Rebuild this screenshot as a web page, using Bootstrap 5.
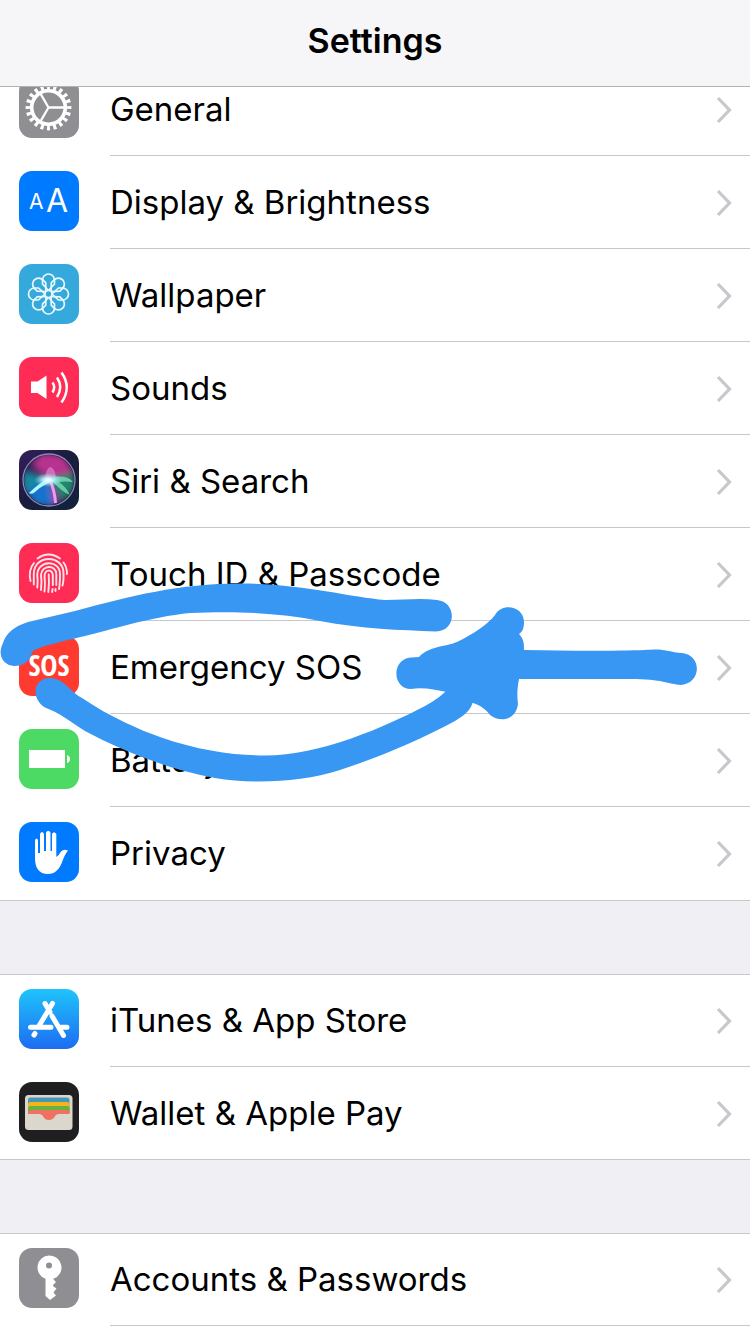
<!DOCTYPE html>
<html lang="en">
<head>
<meta charset="utf-8">
<meta name="viewport" content="width=device-width, initial-scale=1">
<title>Settings</title>
<link href="https://cdn.jsdelivr.net/npm/bootstrap@5.3.0/dist/css/bootstrap.min.css" rel="stylesheet">
<style>
  body { background: #efeff4; color: #000; font-family: Inter, "Liberation Sans", sans-serif; overflow-x: hidden; }
  .title-bar { height: 87px; background: #f6f6f8; border-bottom: 1px solid #b2b2b5; padding-bottom: 4px; }
  .title-bar h1 { font-size: 34px; line-height: 40px; font-weight: 600; }
  main { padding-top: 63px; gap: 73px; }
  .settings-group { background: #fff; box-shadow: inset 0 1px #c8c7cc, inset 0 -1px #c8c7cc; }
  .settings-group:first-of-type { padding-bottom: 1px; }
  .settings-group:last-of-type { box-shadow: inset 0 1px #c8c7cc; }
  .settings-row { height: 93px; padding-left: 19px; gap: 31px; color: #000; font-size: 33px; line-height: 40px; }
  .settings-row:hover { color: #000; }
  .row-body { border-bottom: 1px solid #c8c7cc; padding-right: 17px; }
  .end-row .row-body { border-bottom-color: transparent; }
  .app-icon { width: 60px; height: 60px; border-radius: 13px; margin-bottom: 4px; }
  .chevron { width: 17px; height: 28px; margin-top: 2px; }
  .ink { top: 0; left: 0; width: 750px; height: 900px; z-index: 5; pointer-events: none; }
</style>
</head>
<body>
<svg width="0" height="0" class="position-absolute" aria-hidden="true">
  <symbol id="chevron" viewBox="0 0 17 28"><path d="M2 2 13.500 14 2 26" fill="none" stroke="#c7c7cc" stroke-width="3.2"/></symbol>
</svg>
<header class="title-bar fixed-top d-flex align-items-center justify-content-center">
  <h1 class="m-0">Settings</h1>
</header>

<main class="position-relative d-flex flex-column min-vh-100">
  <nav class="settings-group" aria-label="Device">
    <a href="#general" class="settings-row d-flex align-items-center text-decoration-none">
      <svg class="app-icon flex-shrink-0" viewBox="0 0 60 60" aria-hidden="true">
        <rect width="60" height="60" fill="#8e8e93"/>
        <g fill="none" stroke="#fff">
          <circle cx="29.5" cy="29.5" r="20.5" stroke-width="4.800" pathLength="40" stroke-dasharray=".95 1.05" stroke-dashoffset=".475"/>
          <circle cx="29.5" cy="29.5" r="16.8" stroke-width="3.600"/>
          <path d="M29.500 29.500H46M29.500 29.500 21.200 15.200M29.500 29.500 21.200 43.800" stroke-width="2.300"/>
        </g>
      </svg>
      <span class="row-body d-flex flex-grow-1 h-100 align-items-center justify-content-between"><span>General</span><svg class="chevron" aria-hidden="true"><use href="#chevron"/></svg></span>
    </a>
    <a href="#display" class="settings-row d-flex align-items-center text-decoration-none">
      <svg class="app-icon flex-shrink-0" viewBox="0 0 60 60" aria-hidden="true">
        <rect width="60" height="60" fill="#007aff"/>
        <text x="10" y="38" font-size="21" fill="#fff">A</text><text x="27" y="41" font-size="32" fill="#fff">A</text>
      </svg>
      <span class="row-body d-flex flex-grow-1 h-100 align-items-center justify-content-between"><span>Display &amp; Brightness</span><svg class="chevron" aria-hidden="true"><use href="#chevron"/></svg></span>
    </a>
    <a href="#wallpaper" class="settings-row d-flex align-items-center text-decoration-none">
      <svg class="app-icon flex-shrink-0" viewBox="0 0 60 60" aria-hidden="true">
        <rect width="60" height="60" fill="#36a9dc"/>
        <defs><path id="petal" d="M29.500 26.500 23.500 20V16A6 6 0 0 1 35.500 16V20Z"/></defs>
        <g fill="none" stroke="#e9faff" stroke-width="1.700">
          <g id="petals"><use href="#petal"/><use href="#petal" transform="rotate(45 29.5 30)"/><use href="#petal" transform="rotate(90 29.5 30)"/><use href="#petal" transform="rotate(135 29.5 30)"/></g>
          <use href="#petals" transform="rotate(180 29.5 30)"/>
          <circle cx="29.500" cy="30" r="3.500" fill="#36a9dc"/>
        </g>
      </svg>
      <span class="row-body d-flex flex-grow-1 h-100 align-items-center justify-content-between"><span>Wallpaper</span><svg class="chevron" aria-hidden="true"><use href="#chevron"/></svg></span>
    </a>
    <a href="#sounds" class="settings-row d-flex align-items-center text-decoration-none">
      <svg class="app-icon flex-shrink-0" viewBox="0 0 60 60" aria-hidden="true">
        <rect width="60" height="60" fill="#ff2d55"/>
        <path d="M12 24.500h6.500L27.500 18.500V42L18.500 36H12Z" fill="#fff"/>
        <path d="M33.500 25.500Q37 30 33.500 35.500M38 20.500Q44.500 30 38 40M42.500 15.500Q53 30.500 42.500 45.500" fill="none" stroke="#fff" stroke-width="2.500"/>
      </svg>
      <span class="row-body d-flex flex-grow-1 h-100 align-items-center justify-content-between"><span>Sounds</span><svg class="chevron" aria-hidden="true"><use href="#chevron"/></svg></span>
    </a>
    <a href="#siri" class="settings-row d-flex align-items-center text-decoration-none">
      <svg class="app-icon flex-shrink-0" viewBox="0 0 60 60" aria-hidden="true">
        <defs>
          <linearGradient id="night" x1="0" y1="0" x2="1" y2="1"><stop offset="0" stop-color="#351e5e"/><stop offset=".5" stop-color="#191c3c"/><stop offset="1" stop-color="#10243c"/></linearGradient>
          <radialGradient id="glow"><stop offset="0" stop-color="#fff"/><stop offset=".35" stop-color="#d0fbff" stop-opacity=".85"/><stop offset="1" stop-color="#7fe8ff" stop-opacity="0"/></radialGradient>
          <filter id="haze" x="-50%" y="-50%" width="200%" height="200%"><feGaussianBlur stdDeviation="3"/></filter>
          <filter id="soft" x="-20%" y="-20%" width="140%" height="140%"><feGaussianBlur stdDeviation=".6"/></filter>
          <clipPath id="orb"><circle cx="30" cy="30" r="25"/></clipPath>
        </defs>
        <rect width="60" height="60" fill="url(#night)"/>
        <g clip-path="url(#orb)">
          <g filter="url(#haze)">
            <path d="M30 29 12 15 22 3 44 5 55 21Z" fill="#b8308f"/>
            <path d="M30 29 4 20 4 43Z" fill="#168aa0"/>
            <path d="M30 29 6 42 18 56 36 56Z" fill="#1672cc"/>
            <path d="M30 29 55 22 56 38 44 52Z" fill="#27846d"/>
            <path d="M31 31 34 55 41 52Z" fill="#a03cc0"/>
          </g>
          <g filter="url(#soft)">
            <path d="M26 29Q27 17 32 17Q37 20 37 30Z" fill="#e58ed4" fill-opacity=".6"/>
            <path d="M30 28Q20 33 10 43Q13 45 16 42Q24 34 36 31Z" fill="#b6f6ff"/>
            <path d="M34 27Q48 25 54 32Q46 31 40 32Q47 37 51 45Q42 41 34 32Z" fill="#6fd9b4" fill-opacity=".85"/>
            <path d="M31 30Q36 42 36.500 53" fill="none" stroke="#f49ae8" stroke-width="3"/>
          </g>
          <ellipse cx="29" cy="30" rx="14" ry="7" fill="url(#glow)"/>
        </g>
        <circle cx="30" cy="30" r="26" fill="none" stroke="#8e89b4" stroke-width="1.300"/>
      </svg>
      <span class="row-body d-flex flex-grow-1 h-100 align-items-center justify-content-between"><span>Siri &amp; Search</span><svg class="chevron" aria-hidden="true"><use href="#chevron"/></svg></span>
    </a>
    <a href="#touch-id" class="settings-row d-flex align-items-center text-decoration-none">
      <svg class="app-icon flex-shrink-0" viewBox="0 0 60 60" aria-hidden="true">
        <rect width="60" height="60" fill="#ff2d55"/>
        <g fill="none" stroke="#ffe3e8" stroke-width="1.900" stroke-linecap="round">
          <path d="M18.500 15.500Q29.500 7.500 41 15.500"/>
          <path d="M11.500 38Q9 27 15 20M44.500 19.500Q48 24 48 31"/>
          <path d="M14.800 41.500V31C14.800 11 44.500 11 44.500 30.500Q44.800 38 43.500 42.500"/>
          <path d="M18.300 44.500Q19 38 18.300 32C18.500 16.500 41 16.500 41 31Q41 41 40 46"/>
          <path d="M22 47Q23 39 22 32C22.500 21.500 37.300 21.500 37.300 31V42"/>
          <path d="M25.500 48.500Q26.500 40 25.500 33C26 26 33.500 26 33.800 32V42M36.500 46V48"/>
          <path d="M29.700 31.500Q30.500 40 29.300 49M33.500 46Q33.500 48 33 49"/>
        </g>
      </svg>
      <span class="row-body d-flex flex-grow-1 h-100 align-items-center justify-content-between"><span>Touch ID &amp; Passcode</span><svg class="chevron" aria-hidden="true"><use href="#chevron"/></svg></span>
    </a>
    <a href="#sos" class="settings-row d-flex align-items-center text-decoration-none">
      <svg class="app-icon flex-shrink-0" viewBox="0 0 60 60" aria-hidden="true">
        <rect width="60" height="60" fill="#ff3b30"/>
        <text x="30" y="40" text-anchor="middle" font-family="'Liberation Sans Narrow', 'Open Sans Condensed', 'Liberation Sans', sans-serif" font-size="29" font-weight="700" fill="#fff">SOS</text>
      </svg>
      <span class="row-body d-flex flex-grow-1 h-100 align-items-center justify-content-between"><span>Emergency SOS</span><svg class="chevron" aria-hidden="true"><use href="#chevron"/></svg></span>
    </a>
    <a href="#battery" class="settings-row d-flex align-items-center text-decoration-none">
      <svg class="app-icon flex-shrink-0" viewBox="0 0 60 60" aria-hidden="true">
        <rect width="60" height="60" fill="#4cd964"/>
        <path d="M10 21H46V39H10ZM48 26Q51 27 51 30T48 34Z" fill="#fff"/>
      </svg>
      <span class="row-body d-flex flex-grow-1 h-100 align-items-center justify-content-between"><span>Battery</span><svg class="chevron" aria-hidden="true"><use href="#chevron"/></svg></span>
    </a>
    <a href="#privacy" class="settings-row end-row d-flex align-items-center text-decoration-none">
      <svg class="app-icon flex-shrink-0" viewBox="0 0 60 60" aria-hidden="true">
        <rect width="60" height="60" fill="#007aff"/>
        <path d="M16 36V18Q17.500 15 19 18V31H21V12Q23 8 25 12V29H27V10.500Q29.200 7 31.500 10.500V29H33V12Q35 8.500 37.300 12V35Q39.500 34 42 29.500Q45 26.500 49 28.500Q46 32 43.500 39Q39 52 29 52C20 52 16 46 16 36Z" fill="#fff"/>
      </svg>
      <span class="row-body d-flex flex-grow-1 h-100 align-items-center justify-content-between"><span>Privacy</span><svg class="chevron" aria-hidden="true"><use href="#chevron"/></svg></span>
    </a>
  </nav>

  <nav class="settings-group" aria-label="Store and wallet">
    <a href="#store" class="settings-row d-flex align-items-center text-decoration-none">
      <svg class="app-icon flex-shrink-0" viewBox="0 0 60 60" aria-hidden="true">
        <defs><linearGradient id="sky" x1="0" y1="0" x2="0" y2="1"><stop offset="0" stop-color="#1fc4fb"/><stop offset="1" stop-color="#1d6cf2"/></linearGradient></defs>
        <rect width="60" height="60" fill="url(#sky)"/>
        <g fill="none" stroke="#fff" stroke-width="5" stroke-linecap="round">
          <path d="M33.500 14.500 20.500 36M26 14.500 31 23M33 27 44.500 46.500M16 44.500 15 46M11.500 38.300H32M41 38.300H48"/>
        </g>
      </svg>
      <span class="row-body d-flex flex-grow-1 h-100 align-items-center justify-content-between"><span>iTunes &amp; App Store</span><svg class="chevron" aria-hidden="true"><use href="#chevron"/></svg></span>
    </a>
    <a href="#wallet" class="settings-row end-row d-flex align-items-center text-decoration-none">
      <svg class="app-icon flex-shrink-0" viewBox="0 0 60 60" aria-hidden="true">
        <rect width="60" height="60" fill="#1f1f21"/>
        <rect x="6" y="13" width="47.500" height="35" rx="3.500" fill="#dbd7cc"/>
        <path d="M9 31V18Q9 15.500 11.500 15.500H48Q50.500 15.500 50.500 18V31Z" fill="#4598bb"/>
        <path d="M9 31V22Q9 20 11.500 20H48Q50.500 20 50.500 22V31Z" fill="#f7b417"/>
        <path d="M9 31V26Q9 24 11.500 24H48Q50.500 24 50.500 26V31Z" fill="#66b345"/>
        <path d="M9 32V30Q9 28 11.500 28H48Q50.500 28 50.500 30V32H40Q37 32 35.500 35Q33.500 38 30 38Q26 38 24.500 35Q23 32 20 32Z" fill="#f0715f"/>
      </svg>
      <span class="row-body d-flex flex-grow-1 h-100 align-items-center justify-content-between"><span>Wallet &amp; Apple Pay</span><svg class="chevron" aria-hidden="true"><use href="#chevron"/></svg></span>
    </a>
  </nav>

  <nav class="settings-group flex-grow-1" aria-label="Accounts">
    <a href="#accounts" class="settings-row d-flex align-items-center text-decoration-none">
      <svg class="app-icon flex-shrink-0" viewBox="0 0 60 60" aria-hidden="true">
        <rect width="60" height="60" fill="#8e8e93"/>
        <path fill-rule="evenodd" d="M30 7.500A12 12 0 0 1 34.500 30.800V31.500L37 34 34 37V38L37.500 40.500 34.500 44.500 37 47.500 31 52 26.500 48V30.800A12 12 0 0 1 30 7.500ZM30 14.500A3 3 0 1 0 30 20.500A3 3 0 1 0 30 14.500Z" fill="#fff"/>
      </svg>
      <span class="row-body d-flex flex-grow-1 h-100 align-items-center justify-content-between"><span>Accounts &amp; Passwords</span><svg class="chevron" aria-hidden="true"><use href="#chevron"/></svg></span>
    </a>
  </nav>

  <!-- Freehand marks pointing out Emergency SOS -->
  <svg class="ink position-absolute" viewBox="0 0 750 900" fill="#3897f2" aria-hidden="true">
    <path d="M3 643C6 633 15 626 28 622L75 611C130 596 180 583.500 240 583.500C300 583.500 350 597 385 600C405 600 420 598 437 600C457 602 457 631 436 631.500C400 630 362 629 320 621C280 613 240 611 190 613C150 617 110 630 85 636C60 642 37 647 32 652C31 660 24 666 14 666C3 665-3 655 3 643Z"/>
    <path d="M50 678C65 679 68 690 82 698C110 717 140 730 160 737C200 751 235 755.500 265 755.500C320 755.500 385 727 425 706C436 700 442 695 447 690L473 697C473 706 470 712 455 721C420 740 380 757 340 770C300 783 250 784 215 778C170 770 120 750 85 731C66 719 60 713 46 708C30 699 33 678 50 678Z"/>
    <path d="M411 657.500 419 657C429 646 445 647 457 642C475 633 488 624 495 615C502 602 524 606 524 622C524 629 522 632 519 634C524 639 524 644 524 650C570 651 615 651 645 650C665 648 668 652 682 653C702 655 702 683 681 685C668 684 663 679 630 679H519C517 690 517 696 518 704C516 720 500 723 490 715C485 708 479 705 473 703L440 710 447 692C435 690 424 687 411 689C392 689 391 659 411 657.500Z"/>
  </svg>
</main>
<script src="https://cdn.jsdelivr.net/npm/bootstrap@5.3.0/dist/js/bootstrap.bundle.min.js"></script>
</body>
</html>
